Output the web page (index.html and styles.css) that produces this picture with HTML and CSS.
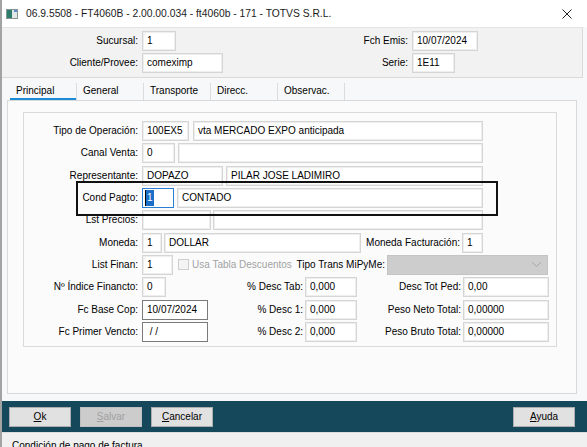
FILE: index.html
```html
<!DOCTYPE html>
<html lang="es">
<head>
    <meta charset="UTF-8">
    <title>FT4060B</title>
    <link rel="stylesheet" href="styles.css">
</head>
<body>
<div class="window">
    <div class="titlebar">
        <svg class="app-icon" width="12" height="10" viewBox="0 0 12 10">
            <rect x="0.5" y="0.5" width="11" height="9" fill="#fff" stroke="#8a9696"/>
            <rect x="1" y="1" width="5" height="8" fill="#2e7c6c"/>
            <rect x="6" y="1" width="5" height="8" fill="#e1e6e6"/>
            <rect x="8" y="1" width="3" height="2" fill="#5b8fd0"/>
        </svg>
        <span class="title">06.9.5508 - FT4060B - 2.00.00.034 - ft4060b - 171 - TOTVS S.R.L.</span>
        <span class="close">
            <svg width="10" height="10" viewBox="0 0 10 10"><path d="M0.5 0.5L9.5 9.5M9.5 0.5L0.5 9.5" stroke="#222" stroke-width="1"/></svg>
        </span>
    </div>

    <div class="header">
        <div class="hcol hcol-left">
            <div class="hrow"><span class="hlbl">Sucursal:</span><span class="fld" style="width:34px">1</span></div>
            <div class="hrow"><span class="hlbl">Cliente/Provee:</span><span class="fld" style="width:81px">comeximp</span></div>
        </div>
        <div class="hcol">
            <div class="hrow"><span class="hlbl">Fch Emis:</span><span class="fld" style="width:66px">10/07/2024</span></div>
            <div class="hrow"><span class="hlbl">Serie:</span><span class="fld" style="width:43px">1E11</span></div>
        </div>
    </div>

    <div class="tabs">
        <span class="tab active">Principal</span>
        <span class="tab">General</span>
        <span class="tab">Transporte</span>
        <span class="tab">Direcc.</span>
        <span class="tab">Observac.</span>
    </div>

    <div class="panel">
        <div class="group">
            <div class="row">
                <span class="lbl">Tipo de Operación:</span>
                <span class="fld" style="width:47px">100EX5</span>
                <span class="fld gap4" style="width:290px">vta MERCADO EXPO anticipada</span>
            </div>
            <div class="row">
                <span class="lbl">Canal Venta:</span>
                <span class="fld" style="width:33px">0</span>
                <span class="fld gap3" style="width:305px"></span>
            </div>
            <div class="row">
                <span class="lbl">Representante:</span>
                <span class="fld" style="width:81px">DOPAZO</span>
                <span class="fld gap3" style="width:257px">PILAR JOSE LADIMIRO</span>
            </div>
            <div class="row focus-row">
                <span class="lbl">Cond Pagto:</span>
                <span class="fld focused" style="width:32px"><span class="sel">1</span></span>
                <span class="fld gap3" style="width:306px">CONTADO</span>
            </div>
            <div class="row">
                <span class="lbl">Lst Precios:</span>
                <span class="fld" style="width:69px"></span>
                <span class="fld gap2" style="width:270px"></span>
            </div>
            <div class="row">
                <span class="lbl">Moneda:</span>
                <span class="fld" style="width:20px">1</span>
                <span class="fld gap2" style="width:197px">DOLLAR</span>
                <span class="lbl lbl-mid" style="width:101px">Moneda Facturación:</span>
                <span class="fld" style="width:21px">1</span>
            </div>
            <div class="row">
                <span class="lbl">List Finan:</span>
                <span class="fld" style="width:31px">1</span>
                <span class="check-wrap">
                    <span class="check"></span>
                    <span class="disabled-text">Usa Tabla Descuentos</span>
                </span>
                <span class="lbl lbl-mid" style="width:92px">Tipo Trans MiPyMe:</span>
                <span class="combo">
                    <svg width="9" height="5" viewBox="0 0 9 5"><path d="M0.5 0.5L4.5 4.5L8.5 0.5" fill="none" stroke="#a3a3a3"/></svg>
                </span>
            </div>
            <div class="row row-cols">
                <span class="lbl">Nº Índice Financto:</span>
                <span class="cell"><span class="fld" style="width:24px">0</span></span>
                <span class="lbl lbl-mid">% Desc Tab:</span>
                <span class="fld">0,000</span>
                <span class="lbl lbl-mid">Desc Tot Ped:</span>
                <span class="fld">0,00</span>
            </div>
            <div class="row row-cols">
                <span class="lbl">Fc Base Cop:</span>
                <span class="cell"><span class="fld dark" style="width:66px">10/07/2024</span></span>
                <span class="lbl lbl-mid">% Desc 1:</span>
                <span class="fld">0,000</span>
                <span class="lbl lbl-mid">Peso Neto Total:</span>
                <span class="fld">0,00000</span>
            </div>
            <div class="row row-cols">
                <span class="lbl">Fc Primer Vencto:</span>
                <span class="cell"><span class="fld dark" style="width:66px">&nbsp;/ /</span></span>
                <span class="lbl lbl-mid">% Desc 2:</span>
                <span class="fld">0,000</span>
                <span class="lbl lbl-mid">Peso Bruto Total:</span>
                <span class="fld">0,00000</span>
            </div>
        </div>
    </div>

    <div class="button-bar">
        <span class="button"><u>O</u>k</span>
        <span class="button disabled"><u>S</u>alvar</span>
        <span class="button"><u>C</u>ancelar</span>
        <span class="button push-right"><u>A</u>yuda</span>
    </div>

    <div class="statusbar">Condición de pago de factura</div>
</div>
</body>
</html>
```

FILE: styles.css
```css
* {
    box-sizing: border-box;
}

html, body {
    margin: 0;
    width: 587px;
    height: 447px;
    overflow: hidden;
}

body {
    background-color: #f7f8f9;
    font-family: 'Liberation Sans', Arial, sans-serif;
    font-size: 10px;
    color: #000;
}

.window {
    width: 592px;
    height: 447px;
    display: flex;
    flex-direction: column;
    border-left: 2px solid #a3a3a3;
    background-color: #f7f8f9;
}

/* title */
.titlebar {
    flex: none;
    height: 27px;
    display: flex;
    align-items: center;
    padding-left: 4px;
    background-color: #fff;
    font-size: 10.3px;
    color: #1b1b1b;
}

.app-icon {
    margin-right: 8px;
}

.title {
    flex: 1;
}

.close {
    width: 50px;
    display: flex;
    justify-content: center;
}

/* header */
.header {
    flex: none;
    display: flex;
    margin-right: 9px;
    padding: 3px 0 4px;
    background-color: #f2f2f2;
    border-top: 1px solid #e4e4e4;
    border-bottom: 1px solid #dadada;
    border-right: 1px solid #dadada;
}

.hcol {
    display: flex;
    flex-direction: column;
    gap: 2px;
}

.hcol-left {
    width: 270px;
}

.hrow {
    display: flex;
    height: 20px;
}

.hlbl {
    width: 140px;
    padding-right: 4px;
    text-align: right;
    line-height: 20px;
    white-space: nowrap;
}

/* fields */
.fld {
    display: block;
    flex: none;
    height: 20px;
    padding-left: 4px;
    line-height: 18px;
    background-color: #fff;
    border: 1px solid #d5d5d5;
    box-shadow: inset 0 0 0 1px #eeeeee;
    white-space: nowrap;
    overflow: hidden;
}

.fld.focused {
    border-color: #2a7fd4;
    box-shadow: none;
    padding-left: 2px;
}

.fld.dark {
    border-color: #7a7a7a;
    box-shadow: none;
}

.sel {
    display: inline-block;
    height: 16px;
    margin-top: 1px;
    padding: 0 1px;
    line-height: 16px;
    background-color: #1c6fc8;
    color: #fff;
    border-left: 1px solid #000;
}

.gap2 { margin-left: 2px; }
.gap3 { margin-left: 3px; }
.gap4 { margin-left: 4px; }

/* tabs */
.tabs {
    flex: none;
    display: flex;
    height: 22px;
    padding-left: 8px;
}

.tab {
    width: 67px;
    height: 17px;
    margin-top: 5px;
    padding-left: 6px;
    line-height: 16px;
    border-right: 1px solid #dcdcdc;
}

.tab.active {
    box-shadow: inset 0 -2px #1b8bd6;
}

/* panel */
.panel {
    flex: none;
    width: 570px;
    height: 294px;
    margin-left: 5px;
    background-color: #fbfbfc;
    border: 1px solid #d9d9d9;
}

.group {
    height: 235px;
    margin: 11px 19px 0 15px;
    padding-top: 8px;
    border: 1px solid #dadada;
    display: flex;
    flex-direction: column;
    gap: 2.33px;
}

.row {
    display: flex;
    height: 20px;
}

.lbl {
    flex: none;
    width: 118px;
    padding-right: 4px;
    text-align: right;
    line-height: 20px;
    white-space: nowrap;
}

.lbl-mid {
    padding-right: 2px;
}

.focus-row {
    position: relative;
}

.focus-row::after {
    content: '';
    position: absolute;
    left: 52px;
    top: -7px;
    width: 418px;
    height: 31px;
    border: 2px solid #111;
    pointer-events: none;
}

.check-wrap {
    width: 122px;
    display: flex;
    align-items: center;
    padding-left: 5px;
}

.check {
    width: 11px;
    height: 11px;
    margin-right: 3px;
    background-color: #f4f4f4;
    border: 1px solid #cfcfcf;
}

.disabled-text {
    color: #a2a2a2;
    white-space: nowrap;
}

.combo {
    width: 161px;
    height: 20px;
    display: flex;
    align-items: center;
    justify-content: flex-end;
    padding-right: 6px;
    background-color: #cdcdcd;
    border: 1px solid #c4c4c4;
}

.row-cols {
    display: grid;
    grid-template-columns: 118px 97px 66px 52px 106px 86px;
}

.row-cols .lbl-mid {
    width: auto;
}

.row-cols .fld {
    width: auto;
}

/* bottom */
.button-bar {
    flex: none;
    display: flex;
    gap: 9px;
    height: 31px;
    margin-top: 7px;
    padding: 6px 17px 0 7px;
    background-color: #16485b;
}

.button {
    width: 62px;
    height: 20px;
    line-height: 18px;
    text-align: center;
    background-color: #e1e1e1;
    border: 1px solid #adadad;
    color: #000;
}

.button.disabled {
    background-color: #cccccc;
    border-color: #bfbfbf;
    color: #a0a0a0;
}

.push-right {
    margin-left: auto;
}

.statusbar {
    flex: none;
    height: 20px;
    padding: 7px 0 0 10px;
    background-color: #f0f0f0;
    border-top: 1px solid #dedede;
    white-space: nowrap;
}
```
